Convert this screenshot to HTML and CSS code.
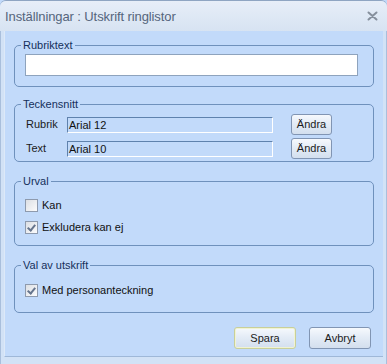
FILE: index.html
```html
<!DOCTYPE html>
<html lang="sv">
<head>
    <meta charset="UTF-8">
    <title>Inställningar: Utskrift ringlistor</title>
    <link rel="stylesheet" href="styles.css">
</head>
<body>

<div class="window">
    <div class="titlebar">
        <span class="title">Inställningar : Utskrift ringlistor</span>
        <svg class="close" width="11" height="10" viewBox="0 0 11 10">
            <path d="M1.5 1.5 L9.5 8.5 M9.5 1.5 L1.5 8.5" stroke="#858f9c" stroke-width="2" stroke-linecap="round"/>
        </svg>
    </div>
    <div class="frame">
        <div class="client">
            <fieldset class="group group-rubrik">
                <legend>Rubriktext</legend>
                <input type="text" class="text-input">
            </fieldset>

            <fieldset class="group group-font">
                <legend>Teckensnitt</legend>
                <div class="font-row">
                    <span class="font-label">Rubrik</span>
                    <div class="font-field">Arial 12</div>
                    <button class="btn small">Ändra</button>
                </div>
                <div class="font-row">
                    <span class="font-label">Text</span>
                    <div class="font-field">Arial 10</div>
                    <button class="btn small">Ändra</button>
                </div>
            </fieldset>

            <fieldset class="group group-urval">
                <legend>Urval</legend>
                <label class="check-row"><span class="check"></span>Kan</label>
                <label class="check-row"><span class="check checked"></span>Exkludera kan ej</label>
            </fieldset>

            <fieldset class="group group-val">
                <legend>Val av utskrift</legend>
                <label class="check-row"><span class="check checked"></span>Med personanteckning</label>
            </fieldset>

            <div class="actions">
                <button class="btn default">Spara</button>
                <button class="btn">Avbryt</button>
            </div>
        </div>
    </div>
</div>

</body>
</html>
```

FILE: styles.css
```css
body {
    margin: 0;
    padding: 0;
    font-family: "Liberation Sans", Arial, sans-serif;
    font-size: 11px;
    background-color: #c2dafa;
    overflow: hidden;
}

.window {
    width: 387px;
    height: 364px;
    box-sizing: border-box;
    border-top: 1px solid #8fa5c2;
    border-radius: 6px 6px 0 0;
    background-color: #c9dcf4;
    display: flex;
    flex-direction: column;
}

.titlebar {
    height: 30px;
    display: flex;
    align-items: center;
    justify-content: space-between;
    padding: 0 9px 0 5px;
    background: linear-gradient(#e7eef8, #d7e3f2);
    border-radius: 6px 6px 0 0;
}

.title {
    font-size: 13px;
    color: #55657c;
    letter-spacing: -0.1px;
}

.close {
    display: block;
}

.frame {
    flex: 1;
    display: flex;
    padding: 0 3px 7px 3px;
    border-left: 1px solid #a9bfdc;
    border-right: 1px solid #a9bfdc;
    background-color: #d2e2f6;
}

.client {
    flex: 1;
    background-color: #c2dafa;
    border-left: 1px solid #dde9f8;
    border-bottom: 1px solid #9fb8d8;
    padding: 8px 9px 0 9px;
    display: flex;
    flex-direction: column;
}

.group {
    margin: 0;
    padding: 0 9px 0 9px;
    border: 1px solid #6f91bc;
    border-radius: 5px;
    min-width: 0;
}

.group legend {
    margin-left: -3px;
    padding: 0 2px;
    line-height: 13px;
    color: #15305a;
}

.group-rubrik {
    padding-bottom: 10px;
}

.text-input {
    display: block;
    box-sizing: border-box;
    width: 333px;
    height: 22px;
    margin: 2px 0 0 1px;
    border: 1px solid #8ea3bd;
    background-color: #ffffff;
    font: inherit;
}

.group-font {
    margin-top: 11px;
    padding-bottom: 3px;
}

.font-row {
    display: flex;
    align-items: center;
    height: 20px;
    margin-top: 3px;
}

.font-row + .font-row {
    margin-top: 4px;
}

.font-label {
    width: 41px;
    padding-left: 2px;
    color: #1b1b1b;
}

.font-field {
    box-sizing: border-box;
    width: 206px;
    height: 16px;
    margin-top: 1px;
    padding-left: 1px;
    line-height: 14px;
    border-top: 1px solid #5f82ad;
    border-left: 1px solid #5f82ad;
    border-right: 1px solid #ffffff;
    border-bottom: 1px solid #ffffff;
    color: #111111;
}

.btn {
    box-sizing: border-box;
    height: 22px;
    padding: 0;
    border: 1px solid #8195b3;
    border-radius: 3px;
    background: linear-gradient(#f6f9fd, #e4ecf6 45%, #d3dfee);
    font: inherit;
    color: #1b1b1b;
}

.btn.small {
    width: 41px;
    height: 21px;
    margin-left: 18px;
}

.group-urval {
    margin-top: 13px;
    padding-bottom: 10px;
}

.check-row {
    display: flex;
    align-items: center;
    height: 16px;
    margin-top: 9px;
    color: #111111;
}

.check-row + .check-row {
    margin-top: 6px;
}

.group-val .check-row {
    margin-top: 10px;
}

.check {
    box-sizing: border-box;
    width: 13px;
    height: 13px;
    margin: 0 4px 0 1px;
    border: 1px solid #8e9aad;
    background: linear-gradient(135deg, #dcdfe4, #fbfbfc);
    position: relative;
}

.check.checked::after {
    content: "";
    position: absolute;
    left: 3px;
    top: 1px;
    width: 3px;
    height: 6px;
    border-right: 2px solid #66758d;
    border-bottom: 2px solid #66758d;
    transform: rotate(40deg);
}

.group-val {
    margin-top: 13px;
    padding-bottom: 14px;
}

.actions {
    display: flex;
    justify-content: flex-end;
    gap: 13px;
    margin-top: auto;
    padding: 0 3px 7px 0;
}

.actions .btn {
    width: 62px;
}

.btn.default {
    border-color: #c8cf9a;
    box-shadow: inset 0 0 0 1px #f1f3d2;
}
```
